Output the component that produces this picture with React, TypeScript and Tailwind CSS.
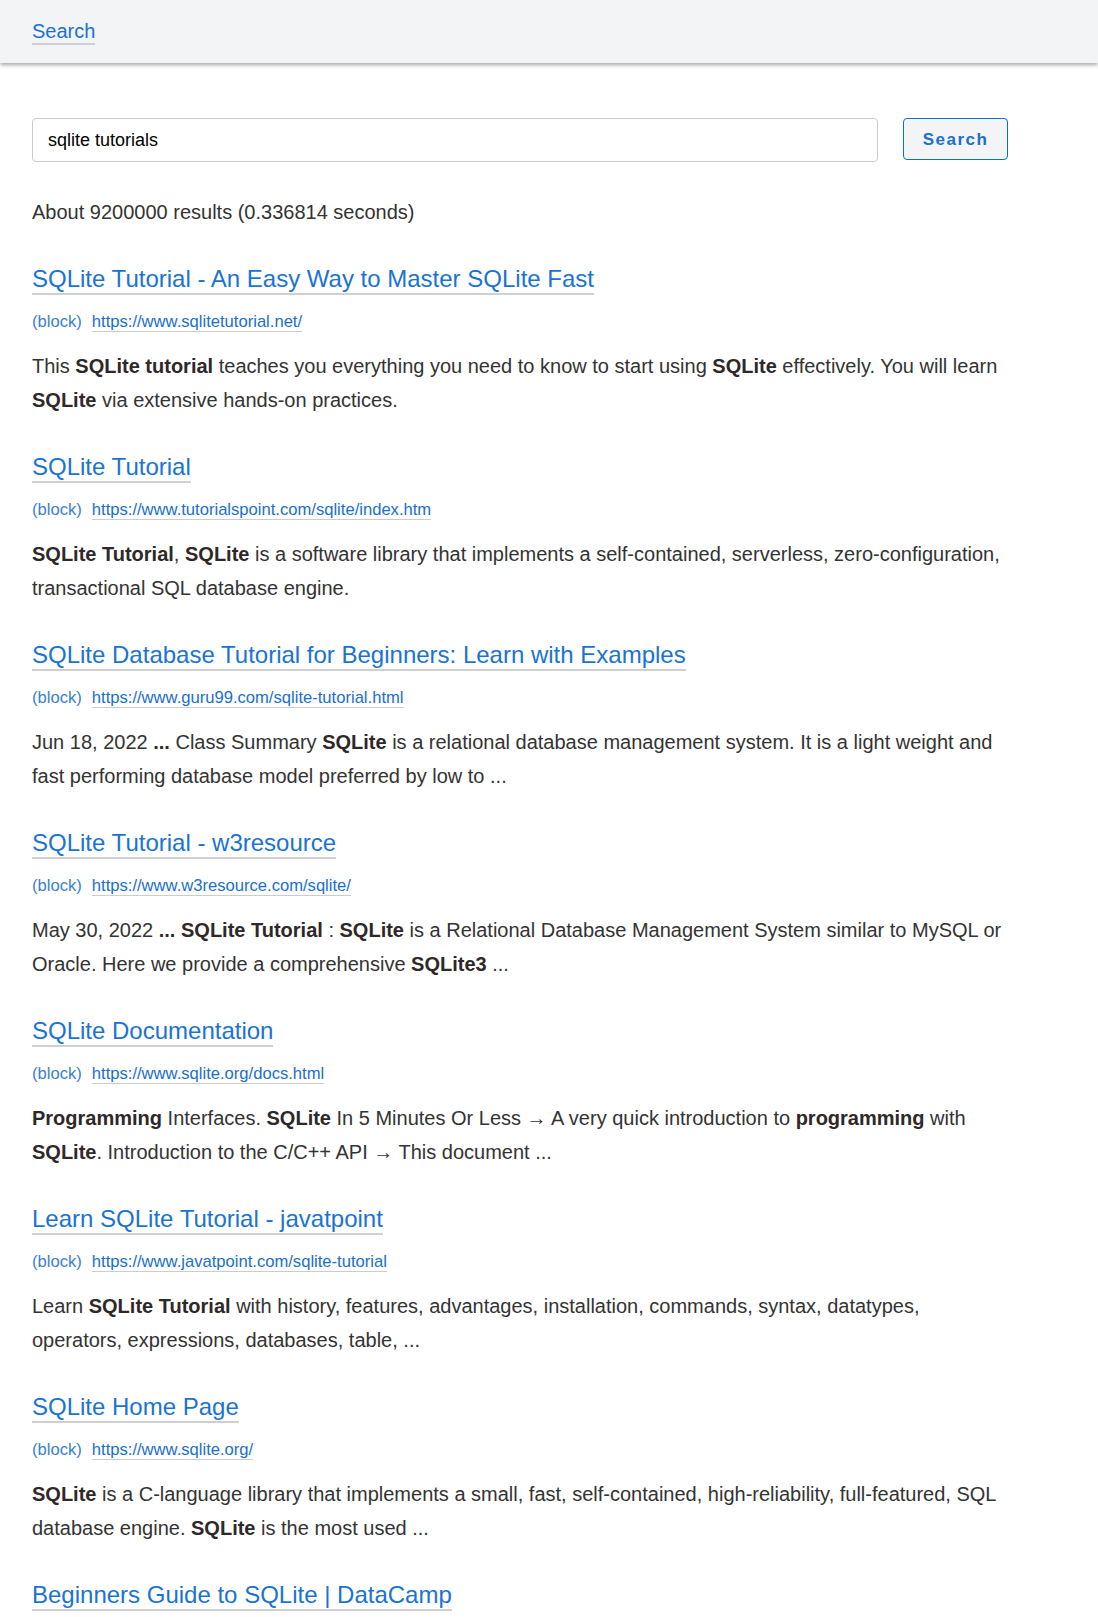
import React from "react";

type Seg = { t: string; b?: boolean };
type Result = { title: string; url: string; desc: Seg[] };

const results: Result[] = [
  {
    title: "SQLite Tutorial - An Easy Way to Master SQLite Fast",
    url: "https://www.sqlitetutorial.net/",
    desc: [
      { t: "This " },
      { t: "SQLite tutorial", b: true },
      { t: " teaches you everything you need to know to start using " },
      { t: "SQLite", b: true },
      { t: " effectively. You will learn " },
      { t: "SQLite", b: true },
      { t: " via extensive hands-on practices." },
    ],
  },
  {
    title: "SQLite Tutorial",
    url: "https://www.tutorialspoint.com/sqlite/index.htm",
    desc: [
      { t: "SQLite Tutorial", b: true },
      { t: ", " },
      { t: "SQLite", b: true },
      { t: " is a software library that implements a self-contained, serverless, zero-configuration, transactional SQL database engine." },
    ],
  },
  {
    title: "SQLite Database Tutorial for Beginners: Learn with Examples",
    url: "https://www.guru99.com/sqlite-tutorial.html",
    desc: [
      { t: "Jun 18, 2022 " },
      { t: "...", b: true },
      { t: " Class Summary " },
      { t: "SQLite", b: true },
      { t: " is a relational database management system. It is a light weight and fast performing database model preferred by low to ..." },
    ],
  },
  {
    title: "SQLite Tutorial - w3resource",
    url: "https://www.w3resource.com/sqlite/",
    desc: [
      { t: "May 30, 2022 " },
      { t: "...", b: true },
      { t: " " },
      { t: "SQLite Tutorial", b: true },
      { t: " : " },
      { t: "SQLite", b: true },
      { t: " is a Relational Database Management System similar to MySQL or Oracle. Here we provide a comprehensive " },
      { t: "SQLite3", b: true },
      { t: " ..." },
    ],
  },
  {
    title: "SQLite Documentation",
    url: "https://www.sqlite.org/docs.html",
    desc: [
      { t: "Programming", b: true },
      { t: " Interfaces. " },
      { t: "SQLite", b: true },
      { t: " In 5 Minutes Or Less \u2192 A very quick introduction to " },
      { t: "programming", b: true },
      { t: " with " },
      { t: "SQLite", b: true },
      { t: ". Introduction to the C/C++ API \u2192 This document ..." },
    ],
  },
  {
    title: "Learn SQLite Tutorial - javatpoint",
    url: "https://www.javatpoint.com/sqlite-tutorial",
    desc: [
      { t: "Learn " },
      { t: "SQLite Tutorial", b: true },
      { t: " with history, features, advantages, installation, commands, syntax, datatypes, operators, expressions, databases, table, ..." },
    ],
  },
  {
    title: "SQLite Home Page",
    url: "https://www.sqlite.org/",
    desc: [
      { t: "SQLite", b: true },
      { t: " is a C-language library that implements a small, fast, self-contained, high-reliability, full-featured, SQL database engine. " },
      { t: "SQLite", b: true },
      { t: " is the most used ..." },
    ],
  },
];

const font = { fontFamily: '"Liberation Sans", Arial, sans-serif' };

export default function App() {
  return (
    <div className="min-h-screen bg-white" style={font}>
      <header className="h-[63px] bg-[#f3f4f6] px-8 pt-[2px] flex items-center shadow-[0_2px_4px_rgba(0,0,0,0.35)] relative z-10">
        <a
          href="#"
          className="inline-block text-[20px] leading-[23px] text-[#1a73d4] border-b-2 border-[#cfcfcf]"
        >
          Search
        </a>
      </header>

      <main className="px-8 pt-[55px] pb-[6px]">
        <div className="w-[976px]">
          <div className="flex items-start gap-[25px]">
            <div className="flex-1 h-[44px] border border-[#cccccc] rounded-[4px] pl-[15px] flex items-center text-[18px] text-black">
              sqlite tutorials
            </div>
            <button className="w-[105px] h-[42px] border border-[#0b6fd0] rounded-[4px] bg-[#f3f4f6] text-[#1a6fd0] font-bold text-[17px] tracking-[1.5px] flex items-center justify-center pt-[1px]">
              Search
            </button>
          </div>

          <div className="mt-[33px] text-[20px] leading-[34px] text-[#333333]">
            About 9200000 results (0.336814 seconds)
          </div>

          <div className="mt-[36px] flex flex-col gap-[36px]">
            {results.map((r, i) => (
              <div key={i} className="flex flex-col items-start">
                <a
                  href="#"
                  className="inline-block text-[24px] leading-[28px] text-[#1a73d4] border-b-2 border-[#d0d0d0]"
                >
                  {r.title}
                </a>
                <div className="mt-[18px] flex items-start text-[16.6px] leading-[18px]">
                  <span className="text-[#3b7fd0]">(block)</span>
                  <a
                    href="#"
                    className="ml-[10px] inline-block text-[#1a6fd0] border-b border-[#cccccc]"
                  >
                    {r.url}
                  </a>
                </div>
                <p className="mt-[17px] text-[20px] leading-[34px] text-[#333333]">
                  {r.desc.map((s, j) =>
                    s.b ? (
                      <b key={j} className="font-bold text-[#2e2828]">
                        {s.t}
                      </b>
                    ) : (
                      <span key={j}>{s.t}</span>
                    )
                  )}
                </p>
              </div>
            ))}
            <div className="flex flex-col items-start">
              <a
                href="#"
                className="inline-block text-[24px] leading-[28px] text-[#1a73d4] border-b-2 border-[#d0d0d0]"
              >
                Beginners Guide to SQLite | DataCamp
              </a>
            </div>
          </div>
        </div>
      </main>
    </div>
  );
}
